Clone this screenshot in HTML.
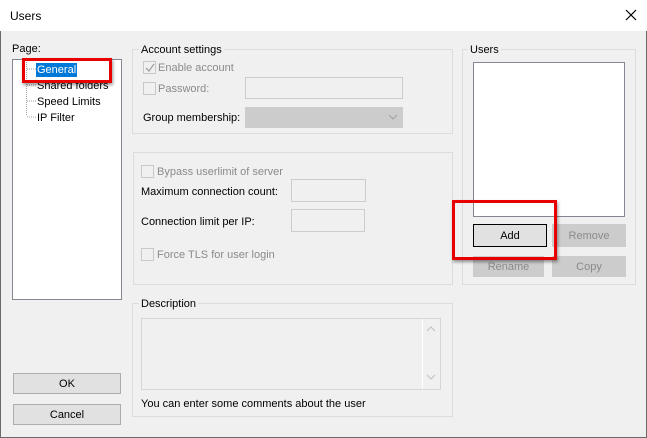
<!DOCTYPE html><html><head><style>
body{margin:0;width:647px;height:438px;overflow:hidden;background:#f0f0f0;font:11px "Liberation Sans",sans-serif;color:#000;position:relative}
div,span{position:absolute;box-sizing:border-box}
span{white-space:nowrap;margin-top:1px}
.g{border:1px solid #dcdcdc}
.lg{background:#f0f0f0;padding:0 2px;line-height:14px}
.dis{color:#8a8a8a}
.cb{width:13px;height:13px;border:1px solid #c8c8c8;background:#f0f0f0}
.in{border:1px solid #cccccc;background:#f0f0f0}
.btn{border:1px solid #adadad;background:#e1e1e1;text-align:center;line-height:20px}
.bd{border:1px solid #cccccc;background:#cccccc;color:#8a8a8a;text-align:center;line-height:20px}
.red{border:3px solid #e80000;box-shadow:1px 2px 3px rgba(0,0,0,.4)}
</style></head><body>
<div style="left:0;top:0;width:647px;height:438px;border:1px solid #6b6b6b;border-top:none"></div>
<div style="left:0;top:0;width:647px;height:31px;background:#fff"></div>
<span style="left:10px;top:8px;font-size:12px">Users</span>
<svg style="position:absolute;left:625px;top:9px" width="12" height="12"><path d="M1 1L11 11M11 1L1 11" stroke="#000" stroke-width="1.2"/></svg>

<span style="left:12px;top:42px">Page:</span>
<div style="left:12px;top:59px;width:110px;height:241px;background:#fff;border:1px solid #828790"></div>
<svg style="position:absolute;left:24px;top:62px" width="14" height="60"><path d="M2.5 0V54M3 7H12M3 23H12M3 39H12M3 55H12" stroke="#a0a0a0" stroke-dasharray="1 1"/></svg>
<span style="left:36px;top:62px;background:#0078d7;color:#fff;padding:0 1px;line-height:14px">General</span>
<span style="left:37px;top:78px;line-height:14px">Shared folders</span>
<span style="left:37px;top:94px;line-height:14px">Speed Limits</span>
<span style="left:37px;top:110px;line-height:14px">IP Filter</span>
<div class="red" style="left:22px;top:58px;width:90px;height:25px"></div>

<div class="btn" style="left:13px;top:373px;width:108px;height:21px">OK</div>
<div class="btn" style="left:13px;top:404px;width:108px;height:21px">Cancel</div>

<div class="g" style="left:132px;top:49px;width:321px;height:85px"></div>
<span class="lg" style="left:139px;top:42px">Account settings</span>
<div class="cb" style="left:143px;top:61px"></div>
<svg style="position:absolute;left:145px;top:63px" width="10" height="10"><path d="M1 5L4 8L9 1" stroke="#a0a0a0" fill="none" stroke-width="1.3"/></svg>
<span class="dis" style="left:158px;top:61px">Enable account</span>
<div class="cb" style="left:143px;top:82px"></div>
<span class="dis" style="left:158px;top:82px">Password:</span>
<div class="in" style="left:245px;top:77px;width:158px;height:22px"></div>
<span style="left:143px;top:111px">Group membership:</span>
<div style="left:245px;top:107px;width:158px;height:21px;background:#cccccc"></div>
<svg style="position:absolute;left:388px;top:114px" width="10" height="7"><path d="M1 1L5 5L9 1" stroke="#a0a0a0" fill="none"/></svg>

<div class="g" style="left:133px;top:152px;width:320px;height:133px"></div>
<div class="cb" style="left:141px;top:165px"></div>
<span class="dis" style="left:157px;top:165px">Bypass userlimit of server</span>
<span style="left:141px;top:185px">Maximum connection count:</span>
<div class="in" style="left:291px;top:179px;width:75px;height:23px"></div>
<span style="left:141px;top:215px">Connection limit per IP:</span>
<div class="in" style="left:291px;top:209px;width:74px;height:23px"></div>
<div class="cb" style="left:141px;top:248px"></div>
<span class="dis" style="left:157px;top:248px">Force TLS for user login</span>

<div class="g" style="left:132px;top:303px;width:321px;height:114px"></div>
<span class="lg" style="left:139px;top:296px">Description</span>
<div style="left:141px;top:318px;width:300px;height:72px;border:1px solid #d6d6d6;background:#f0f0f0"></div>
<div style="left:422px;top:319px;width:18px;height:70px;border-left:1px solid #fff"></div>
<svg style="position:absolute;left:425px;top:325px" width="12" height="58"><path d="M2 6L6 2L10 6M2 50L6 54L10 50" stroke="#c0c0c0" fill="none"/></svg>
<span style="left:141px;top:397px">You can enter some comments about the user</span>

<div class="g" style="left:462px;top:49px;width:174px;height:236px"></div>
<span class="lg" style="left:468px;top:42px">Users</span>
<div style="left:473px;top:62px;width:152px;height:155px;background:#fff;border:1px solid #828790"></div>
<div class="btn" style="left:473px;top:224px;width:74px;height:23px;border-color:#000;line-height:22px">Add</div>
<div class="bd" style="left:552px;top:224px;width:74px;height:23px;line-height:22px">Remove</div>
<div class="bd" style="left:473px;top:256px;width:71px;height:21px">Rename</div>
<div class="bd" style="left:552px;top:256px;width:74px;height:21px">Copy</div>
<div class="red" style="left:452px;top:200px;width:105px;height:60px"></div>
</body></html>
